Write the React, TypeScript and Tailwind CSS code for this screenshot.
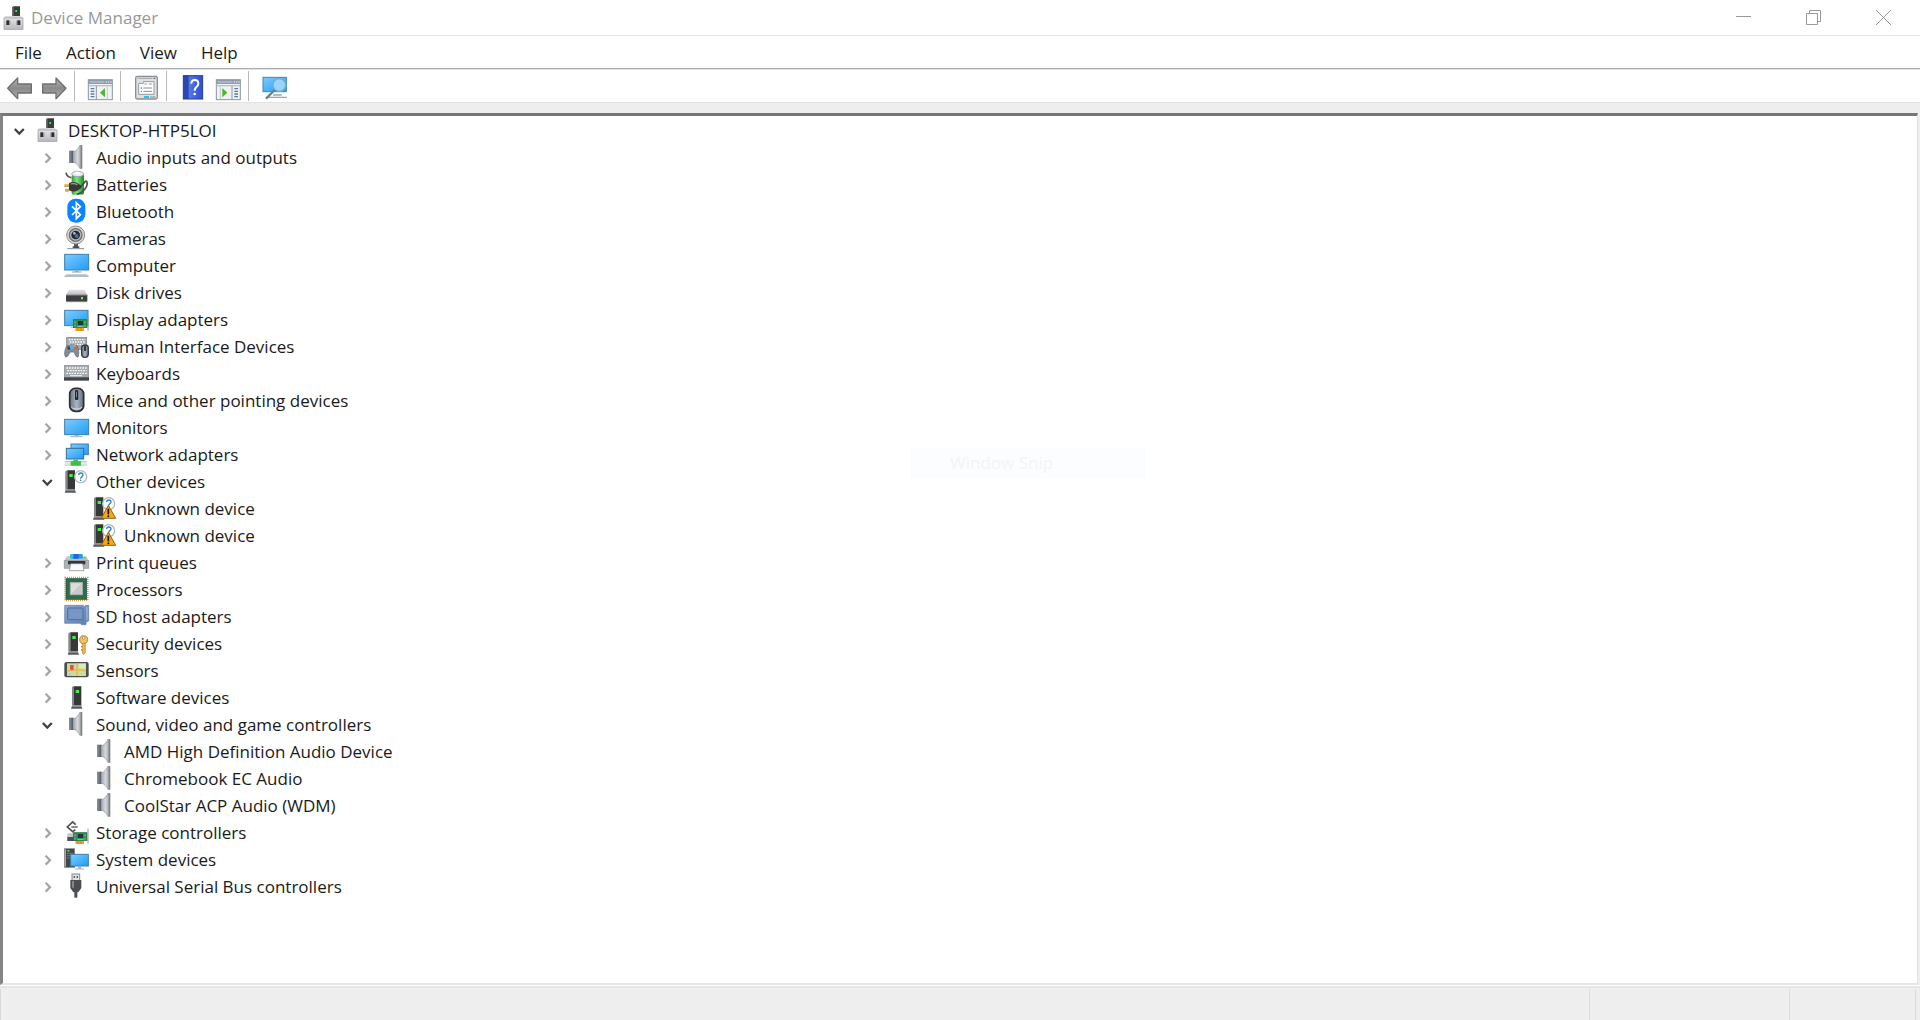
import React, { useState } from 'react';

type IconProps = { children: React.ReactNode };

// Tree icons are drawn on a 72 x 81 grid and fill the height of a row
const TreeIcon: React.FC<IconProps> = ({ children }) => (
  <svg viewBox="0 0 72 81" className="w-6 h-[27px] shrink-0 overflow-visible" aria-hidden="true">
    {children}
  </svg>
);

const ToolIcon: React.FC<IconProps> = ({ children }) => (
  <svg viewBox="0 0 72 96" className="w-6 h-8 shrink-0 overflow-visible" aria-hidden="true">
    {children}
  </svg>
);

const Gradients = () => (
  <svg className="absolute w-0 h-0" aria-hidden="true">
    <defs>
      <linearGradient id="screen" x1="0" y1="0" x2="1" y2="1">
        <stop offset="0" stopColor="#7fcbff" />
        <stop offset="1" stopColor="#1e9df5" />
      </linearGradient>
      <linearGradient id="cone" x1="0" y1="0" x2="1" y2="0">
        <stop offset="0" stopColor="#a4a9ae" />
        <stop offset="0.5" stopColor="#d6d8db" />
        <stop offset="1" stopColor="#9a9ea4" />
      </linearGradient>
      <linearGradient id="magnet" x1="0" y1="0" x2="1" y2="0">
        <stop offset="0" stopColor="#8b96a3" />
        <stop offset="1" stopColor="#4a5460" />
      </linearGradient>
      <linearGradient id="case" x1="0" y1="0" x2="0" y2="1">
        <stop offset="0" stopColor="#e4e4e6" />
        <stop offset="1" stopColor="#b9b9bd" />
      </linearGradient>
      <linearGradient id="arrow" x1="0" y1="0" x2="0" y2="1">
        <stop offset="0" stopColor="#b5b5b5" />
        <stop offset="0.5" stopColor="#8a8a8a" />
        <stop offset="1" stopColor="#b0b0b0" />
      </linearGradient>
      <linearGradient id="help" x1="0" y1="0" x2="1" y2="0">
        <stop offset="0" stopColor="#2c46b4" />
        <stop offset="0.25" stopColor="#2c46b4" />
        <stop offset="0.3" stopColor="#5478e6" />
        <stop offset="1" stopColor="#2f4fc8" />
      </linearGradient>
      <linearGradient id="sd" x1="0" y1="0" x2="1" y2="1">
        <stop offset="0" stopColor="#8fa9d0" />
        <stop offset="1" stopColor="#5b7cae" />
      </linearGradient>
      <linearGradient id="battery" x1="0" y1="0" x2="1" y2="0">
        <stop offset="0" stopColor="#2f9b35" />
        <stop offset="0.4" stopColor="#7be77d" />
        <stop offset="1" stopColor="#1f8a26" />
      </linearGradient>
      <linearGradient id="mouse" x1="0" y1="0" x2="1" y2="0">
        <stop offset="0" stopColor="#66727f" />
        <stop offset="0.5" stopColor="#a9b6c5" />
        <stop offset="1" stopColor="#5f6b78" />
      </linearGradient>
    </defs>
  </svg>
);

const DeviceHubIcon = () => (
  <TreeIcon>
    <path d="M30 7l5-3h19v31H30z" fill="#3b3b3d" />
    <path d="M30 7l5-3v31h-5z" fill="#6d6d70" />
    <rect x="40" y="15" width="5" height="6" fill="#3df04a" />
    <path d="M14 33h42l7 7H5l4-7z" fill="#d9d9dc" />
    <rect x="6" y="39" width="57" height="34" fill="url(#case)" stroke="#98989c" strokeWidth="2" />
    <rect x="13" y="46" width="9" height="14" fill="#2e2e30" />
    <rect x="46" y="46" width="9" height="14" fill="#2e2e30" />
    <path d="M24 47v13M44 47v13" stroke="#8a8a8e" strokeWidth="2" />
  </TreeIcon>
);

const SpeakerIcon = () => (
  <TreeIcon>
    <rect x="15" y="20" width="14" height="37" fill="url(#magnet)" />
    <path d="M28 24C37 21 44 13 48 3h5v71h-5C44 64 37 57 28 54z" fill="url(#cone)" />
    <path d="M28 24C37 21 44 13 48 3M28 54c9 3 16 10 20 20" fill="none" stroke="#8b9097" strokeWidth="2" />
    <rect x="50" y="3" width="5" height="71" rx="2" fill="#7f8389" />
  </TreeIcon>
);

const BatteryIcon = () => (
  <TreeIcon>
    <rect x="23" y="9" width="37" height="62" rx="6" fill="url(#battery)" />
    <ellipse cx="41" cy="9" rx="18" ry="8" fill="#e9e9f2" stroke="#8b8ba0" strokeWidth="2" />
    <ellipse cx="41" cy="6" rx="8" ry="4" fill="#fff" />
    <path d="M6 5c2 10 6 14 16 15" fill="none" stroke="#505050" strokeWidth="5" />
    <path d="M50 45c10-2 11-18 18-14 6 12-8 34-30 39" fill="none" stroke="#4a4d4a" strokeWidth="5" />
    <path d="M15 36c8-5 20-4 28 2l9 6v7l-9 6c-8 6-20 6-28 1z" fill="#3a3836" />
    <path d="M20 39c8-3 14-2 20 3" stroke="#9a9490" strokeWidth="4" fill="none" />
    <path d="M1 42h14M3 56h12" stroke="#e3b01e" strokeWidth="5" />
    <path d="M1 46h14M3 60h12" stroke="#6d5207" strokeWidth="2" />
  </TreeIcon>
);

const BluetoothIcon = () => (
  <TreeIcon>
    <rect x="10" y="2" width="54" height="72" rx="25" fill="#0a84ff" />
    <path d="M24 25l25 25-12 12V14l12 12-25 25" fill="none" stroke="#fff" strokeWidth="5" />
  </TreeIcon>
);

const CameraIcon = () => (
  <TreeIcon>
    <rect x="30" y="54" width="12" height="13" fill="#555" />
    <path d="M10 71h50" stroke="#8d8d8d" strokeWidth="3" />
    <path d="M26 64h20v5H26z" fill="#4b4b4b" />
    <circle cx="35" cy="30" r="27" fill="#d8d8d8" stroke="#8b8b8b" strokeWidth="3" />
    <circle cx="35" cy="30" r="19" fill="#b5b5b5" stroke="#707070" strokeWidth="4" />
    <circle cx="35" cy="30" r="13" fill="#1f2a38" />
    <circle cx="38" cy="33" r="6" fill="#4d7096" />
    <circle cx="31" cy="25" r="4" fill="#a9bccf" />
  </TreeIcon>
);

const ComputerIcon = () => (
  <TreeIcon>
    <rect x="2" y="7" width="72" height="47" fill="url(#screen)" stroke="#3f7fac" strokeWidth="3" />
    <path d="M32 55h12v5H32z" fill="#9fb4c4" />
    <path d="M24 60h29" stroke="#8da2b2" strokeWidth="3" />
    <path d="M8 67h60l6 6H1z" fill="#b5c4d1" />
    <path d="M1 73h73" stroke="#8496a5" strokeWidth="2" />
  </TreeIcon>
);

const DiskIcon = () => (
  <TreeIcon>
    <path d="M15 32h46l9 17H6z" fill="url(#case)" />
    <path d="M6 48h64v18l-3 3H9l-3-3z" fill="#3e3e40" />
    <path d="M6 48h64" stroke="#8b8b8d" strokeWidth="3" />
    <rect x="51" y="54" width="6" height="7" fill="#4dfb54" />
    <path d="M8 68h60" stroke="#8f8f8f" strokeWidth="3" />
  </TreeIcon>
);

const AdapterCard = () => (
  <>
    <rect x="28" y="41" width="41" height="24" fill="#2f8a55" stroke="#256b43" strokeWidth="2" />
    <rect x="42" y="45" width="15" height="12" fill="#1d3b2c" />
    <path d="M33 46v6M33 56v5M63 46v6M63 57v5M40 61h19" stroke="#7fd8a0" strokeWidth="3" />
    <path d="M34 66h26v9H34z" fill="#f3a21a" />
    <path d="M42 66v9M51 66v9" stroke="#c87708" strokeWidth="2" />
    <path d="M72 29v45" stroke="#8c9a96" strokeWidth="3" />
  </>
);

const DisplayAdapterIcon = () => (
  <TreeIcon>
    <rect x="2" y="13" width="70" height="46" fill="url(#screen)" stroke="#3f7fac" strokeWidth="3" />
    <path d="M20 64h12" stroke="#9fb4c4" strokeWidth="3" />
    <AdapterCard />
  </TreeIcon>
);

const HidIcon = () => (
  <TreeIcon>
    <rect x="8" y="13" width="60" height="36" fill="#a2a9b1" stroke="#7c838b" strokeWidth="2" />
    <path d="M14 20h50M17 27h45M14 34h50" stroke="#fff" strokeWidth="4" strokeDasharray="5 3" />
    <path d="M9 38c8-4 24-4 30 0 6 8 7 27 3 34-7 2-9-12-13-15H19c-4 3-6 16-14 15-6-7-2-26 4-34z" fill="#848c96" stroke="#555c65" strokeWidth="2" />
    <circle cx="15" cy="45" r="5" fill="#3a4048" />
    <circle cx="31" cy="38" r="4" fill="#f2a23a" />
    <circle cx="24" cy="42" r="7" fill="#44b4ff" />
    <circle cx="34" cy="46" r="4" fill="#e8574a" />
    <rect x="53" y="36" width="20" height="37" rx="9" fill="url(#mouse)" stroke="#3a4046" strokeWidth="4" />
    <path d="M63 38v16" stroke="#1e2226" strokeWidth="5" />
  </TreeIcon>
);

const KeyboardIcon = () => (
  <TreeIcon>
    <rect x="1" y="16" width="73" height="38" fill="#a5abb1" stroke="#868c92" strokeWidth="2" />
    <path d="M7 24h62M10 32h58M7 40h62" stroke="#fff" strokeWidth="4" strokeDasharray="5 3" />
    <path d="M18 47h36" stroke="#f4f4f4" strokeWidth="3" />
    <path d="M0 52h75v10H0z" fill="#42464a" />
  </TreeIcon>
);

const MouseIcon = () => (
  <TreeIcon>
    <rect x="17" y="4" width="42" height="69" rx="17" fill="url(#mouse)" stroke="#2a2d31" strokeWidth="5" />
    <rect x="33" y="9" width="10" height="30" rx="3" fill="#26292d" />
    <rect x="36" y="14" width="3" height="16" fill="#788492" />
    <path d="M22 60c6 8 26 8 32 0" stroke="#dce3ea" strokeWidth="3" fill="none" />
  </TreeIcon>
);

const MonitorIcon = () => (
  <TreeIcon>
    <rect x="2" y="16" width="72" height="46" fill="url(#screen)" stroke="#3f7fac" strokeWidth="3" />
    <path d="M32 63h12v4H32z" fill="#9fb4c4" />
    <path d="M19 68h37" stroke="#9fb0bd" strokeWidth="3" />
  </TreeIcon>
);

const NetworkIcon = () => (
  <TreeIcon>
    <rect x="21" y="9" width="52" height="32" fill="url(#screen)" stroke="#3f7fac" strokeWidth="3" />
    <rect x="7" y="22" width="52" height="32" fill="url(#screen)" stroke="#2f6f9c" strokeWidth="3" />
    <path d="M2 62h66M2 72h66" stroke="#b5b9b7" strokeWidth="3" />
    <path d="M2 67h66" stroke="#e3e5e4" strokeWidth="6" />
    <path d="M28 56h14v5h9v13H20V61h8z" fill="#3fbf4a" />
  </TreeIcon>
);

const Tower = ({ x }: { x: number }) => (
  <g transform={`translate(${x} 0)`}>
    <path d="M0 10l6-3h22v58H0z" fill="#353739" />
    <path d="M0 10l6-3v58H0z" fill="#85888b" />
    <rect x="11" y="18" width="10" height="9" fill="#3ef448" />
    <path d="M0 66h28l3 8H-3z" fill="#56595c" />
    <path d="M0 66h28" stroke="#b7babd" strokeWidth="3" />
  </g>
);

const Question = () => (
  <>
    <circle cx="50" cy="26" r="18" fill="#fff" stroke="#b4b9bd" strokeWidth="4" />
    <path d="M44 21c0-8 13-8 13 0 0 5-7 5-7 11" fill="none" stroke="#2b84cf" strokeWidth="4" />
    <circle cx="50" cy="37" r="2.5" fill="#2b84cf" />
  </>
);

const OtherIcon = () => (
  <TreeIcon>
    <Tower x={5} />
    <Question />
  </TreeIcon>
);

const UnknownIcon = () => (
  <TreeIcon>
    <Tower x={6} />
    <Question />
    <path d="M49 31L71 70H28z" fill="#f4a81d" stroke="#9b5f06" strokeWidth="3" strokeLinejoin="round" />
    <path d="M49 41v17" stroke="#1c1400" strokeWidth="5" />
    <circle cx="49" cy="64" r="3" fill="#1c1400" />
  </TreeIcon>
);

const PrinterIcon = () => (
  <TreeIcon>
    <path d="M17 29l3-14h35l3 14z" fill="#1b9fe8" />
    <path d="M20 15h10l-3 14H17z" fill="#27c4d8" />
    <path d="M30 15h14v14H27z" fill="#2466d8" />
    <path d="M8 22h10l2 8h36l2-8h9l7 13H1z" fill="#c7c9cb" />
    <path d="M1 34h73v24H1z" fill="#aeb2b6" stroke="#85898d" strokeWidth="2" />
    <path d="M12 36h52v10H12z" fill="#333639" />
    <path d="M20 44h36l4 21H16z" fill="#fafafa" stroke="#7d8185" strokeWidth="2" />
    <rect x="58" y="24" width="7" height="5" fill="#3fdb50" />
  </TreeIcon>
);

const ProcessorIcon = () => (
  <TreeIcon>
    <rect x="3" y="5" width="68" height="68" fill="none" stroke="#c9a353" strokeWidth="5" strokeDasharray="3 3" />
    <rect x="6" y="8" width="62" height="62" fill="#2f6b4c" stroke="#225540" strokeWidth="2" />
    <rect x="19" y="20" width="36" height="36" fill="#dcdddc" stroke="#a9b5ae" strokeWidth="3" />
    <path d="M21 54L53 22v32z" fill="#c8cac9" />
  </TreeIcon>
);

const SdIcon = () => (
  <TreeIcon>
    <path d="M2 7h56v4h6V7h10v47l-8 3v8H52l-3-4H2z" fill="url(#sd)" stroke="#5f7fae" strokeWidth="2" />
    <rect x="11" y="15" width="46" height="35" rx="3" fill="#7896c3" stroke="#4f6f9f" strokeWidth="3" />
    <path d="M69 12v40" stroke="#b4c6df" strokeWidth="3" />
  </TreeIcon>
);

const SecurityIcon = () => (
  <TreeIcon>
    <Tower x={14} />
    <circle cx="59" cy="29" r="12" fill="#efc56c" stroke="#bc8830" strokeWidth="3" />
    <circle cx="59" cy="24" r="4" fill="#fff" stroke="#a97726" strokeWidth="2" />
    <path d="M55 40h9v28l-5 6-4-5z" fill="#e7b451" stroke="#bc8830" strokeWidth="2" />
    <path d="M55 50h-4M55 60h-4" stroke="#bc8830" strokeWidth="4" />
  </TreeIcon>
);

const SensorIcon = () => (
  <TreeIcon>
    <rect x="1" y="15" width="73" height="46" rx="6" fill="#4c4f50" />
    <rect x="9" y="19" width="57" height="38" fill="#cbdc9d" />
    <path d="M9 43c16-8 34-4 57-2M39 19v38" stroke="#e6bd4d" strokeWidth="5" fill="none" />
    <rect x="45" y="20" width="20" height="14" fill="#ddebb8" />
    <path d="M18 24h11v12l-5 5-6-5z" fill="#e54d55" />
    <path d="M10 56l8-8 6 8z" fill="#a2cde0" />
  </TreeIcon>
);

const SoftwareIcon = () => (
  <TreeIcon>
    <Tower x={24} />
  </TreeIcon>
);

const StorageIcon = () => (
  <TreeIcon>
    <path d="M10 43h30v23H10z" fill="#c3c6c9" />
    <path d="M10 54h24v12H10z" fill="#4c5053" />
    <path d="M35 17l-9-8L10 24l16 14 8-6" fill="none" stroke="#4e5255" strokeWidth="5" />
    <path d="M22 24h19" stroke="#4e5255" strokeWidth="4" />
    <AdapterCard />
  </TreeIcon>
);

const SystemIcon = () => (
  <TreeIcon>
    <rect x="1" y="8" width="31" height="56" fill="#434649" stroke="#85898c" strokeWidth="2" />
    <path d="M4 10v52" stroke="#a5a9ac" strokeWidth="4" />
    <rect x="10" y="12" width="6" height="5" fill="#41ef4b" />
    <path d="M8 22h19M8 29h19M8 36h19" stroke="#92969a" strokeWidth="2" />
    <rect x="20" y="25" width="53" height="35" fill="url(#screen)" stroke="#3f7fac" strokeWidth="3" />
    <path d="M42 62h10v6H42z" fill="#9fb4c4" />
    <path d="M33 69h27" stroke="#9fb4c4" strokeWidth="3" />
  </TreeIcon>
);

const UsbIcon = () => (
  <TreeIcon>
    <rect x="24" y="3" width="23" height="20" fill="#dfe0e1" stroke="#85888b" strokeWidth="3" />
    <path d="M29 9h4v6h-4zM38 9h4v6h-4z" fill="#55585b" />
    <path d="M19 21h33v24l-9 13H28l-9-13z" fill="#4b4e50" />
    <path d="M24 24h6v20h-6z" fill="#85888b" />
    <path d="M31 57h9v17h-9z" fill="#4b4e50" />
  </TreeIcon>
);

interface DeviceNode {
  id: string;
  name: string;
  icon: React.FC;
  children?: DeviceNode[];
  leaf?: boolean;
}

const categories: DeviceNode[] = [
  { id: 'audio', name: 'Audio inputs and outputs', icon: SpeakerIcon },
  { id: 'batteries', name: 'Batteries', icon: BatteryIcon },
  { id: 'bluetooth', name: 'Bluetooth', icon: BluetoothIcon },
  { id: 'cameras', name: 'Cameras', icon: CameraIcon },
  { id: 'computer', name: 'Computer', icon: ComputerIcon },
  { id: 'disks', name: 'Disk drives', icon: DiskIcon },
  { id: 'display', name: 'Display adapters', icon: DisplayAdapterIcon },
  { id: 'hid', name: 'Human Interface Devices', icon: HidIcon },
  { id: 'keyboards', name: 'Keyboards', icon: KeyboardIcon },
  { id: 'mice', name: 'Mice and other pointing devices', icon: MouseIcon },
  { id: 'monitors', name: 'Monitors', icon: MonitorIcon },
  { id: 'network', name: 'Network adapters', icon: NetworkIcon },
  {
    id: 'other',
    name: 'Other devices',
    icon: OtherIcon,
    children: [
      { id: 'unknown-1', name: 'Unknown device', icon: UnknownIcon, leaf: true },
      { id: 'unknown-2', name: 'Unknown device', icon: UnknownIcon, leaf: true },
    ],
  },
  { id: 'print', name: 'Print queues', icon: PrinterIcon },
  { id: 'processors', name: 'Processors', icon: ProcessorIcon },
  { id: 'sd', name: 'SD host adapters', icon: SdIcon },
  { id: 'security', name: 'Security devices', icon: SecurityIcon },
  { id: 'sensors', name: 'Sensors', icon: SensorIcon },
  { id: 'software', name: 'Software devices', icon: SoftwareIcon },
  {
    id: 'sound',
    name: 'Sound, video and game controllers',
    icon: SpeakerIcon,
    children: [
      { id: 'amd', name: 'AMD High Definition Audio Device', icon: SpeakerIcon, leaf: true },
      { id: 'chromebook', name: 'Chromebook EC Audio', icon: SpeakerIcon, leaf: true },
      { id: 'coolstar', name: 'CoolStar ACP Audio (WDM)', icon: SpeakerIcon, leaf: true },
    ],
  },
  { id: 'storage', name: 'Storage controllers', icon: StorageIcon },
  { id: 'system', name: 'System devices', icon: SystemIcon },
  { id: 'usb', name: 'Universal Serial Bus controllers', icon: UsbIcon },
];

const root: DeviceNode = { id: 'root', name: 'DESKTOP-HTP5LOI', icon: DeviceHubIcon, children: categories };

interface TreeItemProps {
  node: DeviceNode;
  open: string[];
  onToggle: (id: string) => void;
}

const TreeItem: React.FC<TreeItemProps> = ({ node, open, onToggle }) => {
  const isOpen = open.includes(node.id);
  const Icon = node.icon;

  return (
    <li>
      <div className="flex items-center h-[27px]">
        {node.leaf ? (
          <span className="w-6 shrink-0" />
        ) : (
          <button
            onClick={() => onToggle(node.id)}
            aria-label={node.name}
            aria-expanded={isOpen}
            className="flex items-center justify-center w-6 h-6 shrink-0"
          >
            <svg viewBox="0 0 12 12" className="w-3 h-3" fill="none" aria-hidden="true">
              {isOpen ? (
                <path d="M1.8 4L6.3 8.5 10.8 4" stroke="#404040" strokeWidth="2.3" />
              ) : (
                <path d="M4.6 1.8L9 6.2 4.6 10.6" stroke="#a6a6a6" strokeWidth="2.3" />
              )}
            </svg>
          </button>
        )}
        <div className="flex items-center gap-2 ml-[5px]">
          <Icon />
          <span className="whitespace-nowrap">{node.name}</span>
        </div>
      </div>
      {isOpen && node.children && (
        <ul className="pl-7">
          {node.children.map((child) => (
            <TreeItem key={child.id} node={child} open={open} onToggle={onToggle} />
          ))}
        </ul>
      )}
    </li>
  );
};

const Separator = () => <div className="w-px h-[30px] bg-[#b8b8b8] ml-[7px] mr-[14px]" />;

const PaneFrame = () => (
  <>
    <rect x="-2" y="29" width="72" height="60" fill="#f1f2f4" stroke="#8e959d" strokeWidth="3" />
    <path d="M-2 30h72v12H-2z" fill="#8f9bab" />
    <path d="M2 36h44" stroke="#c8d0da" strokeWidth="3" />
    <path d="M50 36h4M57 36h4M64 36h4" stroke="#fff" strokeWidth="3" />
    <path d="M-1 47h70" stroke="#b9c0c8" strokeWidth="4" />
  </>
);

const App = () => {
  const [open, setOpen] = useState<string[]>(['root', 'other', 'sound']);

  const handleToggle = (id: string) => {
    setOpen((prev) => (prev.includes(id) ? prev.filter((item) => item !== id) : [...prev, id]));
  };

  return (
    <div className="flex flex-col min-h-screen bg-[#eeeeee] font-['Open_Sans','Noto_Sans',sans-serif] text-[17px] leading-6 text-[#1a1a1a]">
      <Gradients />

      {/* Title bar */}
      <header className="flex items-center justify-between h-9 bg-white border-b border-[#e6e6e6]">
        <div className="flex items-center gap-[5px] pl-[2px] pt-px text-[#999999]">
          <DeviceHubIcon />
          <h1>Device Manager</h1>
        </div>
        <div className="flex h-full pr-[2px] text-[#999999]">
          <button aria-label="Minimize" className="flex items-center justify-center w-[70px]">
            <svg viewBox="0 0 15 15" className="w-[15px] h-[15px]" fill="none" stroke="currentColor">
              <path d="M0 6.5h15" />
            </svg>
          </button>
          <button aria-label="Restore" className="flex items-center justify-center w-[70px]">
            <svg viewBox="0 0 15 15" className="w-[15px] h-[15px]" fill="none" stroke="currentColor">
              <path d="M.5 3.5h11v11H.5zM3.5 3.5v-3h11v11h-3" />
            </svg>
          </button>
          <button aria-label="Close" className="flex items-center justify-center w-[70px]">
            <svg viewBox="0 0 15 15" className="w-[15px] h-[15px]" fill="none" stroke="currentColor">
              <path d="M0 0l15 15M15 0L0 15" />
            </svg>
          </button>
        </div>
      </header>

      {/* Menu bar */}
      <nav className="flex items-center h-[33px] pl-[3px] pt-[2px] bg-white border-b border-[#a9adb0]">
        <button className="px-3">File</button>
        <button className="px-3">Action</button>
        <button className="px-3">View</button>
        <button className="px-3">Help</button>
      </nav>

      {/* Toolbar */}
      <div className="flex items-center h-[34px] pl-[7px] bg-white border-t border-b border-t-[#dfe5e9] border-b-[#e2e2e2]">
        <div className="flex items-center gap-3">
          <button aria-label="Back">
            <ToolIcon>
              <path d="M2 55L32 24v18h41v27H32v17z" fill="url(#arrow)" stroke="#6f6f6f" strokeWidth="4" strokeLinejoin="round" />
            </ToolIcon>
          </button>
          <button aria-label="Forward">
            <ToolIcon>
              <path d="M69 55L39 24v18H-1v27h40v17z" fill="url(#arrow)" stroke="#6f6f6f" strokeWidth="4" strokeLinejoin="round" />
            </ToolIcon>
          </button>
        </div>
        <Separator />
        <button aria-label="Show/Hide Console Tree">
          <ToolIcon>
            <PaneFrame />
            <path d="M22 48v40" stroke="#8e959d" strokeWidth="3" />
            <path d="M5 56h11M5 64h11M5 72h11M5 80h11" stroke="#4a7fb5" strokeWidth="4" />
            <path d="M48 54v28L33 68z" fill="#4fb62b" />
            <path d="M55 49v39" stroke="#c5cbd2" strokeWidth="3" />
          </ToolIcon>
        </button>
        <Separator />
        <button aria-label="Properties">
          <ToolIcon>
            <rect x="2" y="19" width="65" height="68" rx="5" fill="#dfe0e2" stroke="#8b8f93" strokeWidth="4" />
            <path d="M8 25h44" stroke="#aab0b5" strokeWidth="4" />
            <path d="M56 25h5" stroke="#60656a" strokeWidth="4" />
            <path d="M11 40h14v-5h32v38H11z" fill="#fff" stroke="#969ba0" strokeWidth="3" />
            <path d="M28 42h8M41 42h10" stroke="#969ba0" strokeWidth="3" />
            <path d="M17 54h4M17 64h4" stroke="#2ba6de" strokeWidth="4" />
            <path d="M25 54h26M25 64h26" stroke="#8b9095" strokeWidth="3" />
            <path d="M27 81h15" stroke="#27c3ef" strokeWidth="6" />
            <path d="M46 81h15" stroke="#b0b4b8" strokeWidth="6" />
          </ToolIcon>
        </button>
        <Separator />
        <div className="flex items-center gap-3">
          <button aria-label="Help topics">
            <ToolIcon>
              <rect x="7" y="17" width="58" height="70" fill="url(#help)" stroke="#243a99" strokeWidth="3" />
              <path d="M31 41c0-15 21-15 21 0 0 10-11 9-11 21" fill="none" stroke="#fff" strokeWidth="6" />
              <circle cx="41" cy="72" r="4" fill="#fff" />
            </ToolIcon>
          </button>
          <button aria-label="Show/Hide Action Pane">
            <ToolIcon>
              <PaneFrame />
              <path d="M45 48v40" stroke="#8e959d" strokeWidth="3" />
              <path d="M52 56h11M52 64h11M52 72h11M52 80h11" stroke="#4a7fb5" strokeWidth="4" />
              <path d="M16 54v28l15-14z" fill="#4fb62b" />
              <path d="M10 49v39" stroke="#c5cbd2" strokeWidth="3" />
            </ToolIcon>
          </button>
        </div>
        <Separator />
        <button aria-label="Scan for hardware changes">
          <ToolIcon>
            <rect x="0" y="22" width="70" height="43" fill="url(#screen)" stroke="#3f86b8" strokeWidth="3" />
            <path d="M14 82h58M30 75h26" stroke="#8fa6b6" strokeWidth="4" />
            <circle cx="49" cy="45" r="19" fill="#a9dcf6" fillOpacity="0.85" stroke="#78aeca" strokeWidth="4" />
            <path d="M35 60L9 86" stroke="#6d7f8c" strokeWidth="7" />
          </ToolIcon>
        </button>
      </div>

      {/* Device tree */}
      <main className="relative flex-1 mt-[10px] mr-[2px] bg-white border-t-[3px] border-l-[3px] border-b-2 border-r border-t-[#777777] border-l-[#858585] border-b-[#e6e6e6] border-r-[#e3e3e3]">
        <ul className="pl-1 pt-px">
          <TreeItem node={root} open={open} onToggle={handleToggle} />
        </ul>
        <div className="absolute left-[907px] top-[331px] w-[236px] h-[31px] flex items-center pl-10 bg-[#fbfdff] text-[#f3f4f6] pointer-events-none">
          Window Snip
        </div>
      </main>

      {/* Status bar */}
      <footer className="flex h-[35px] border-t border-white">
        <div className="flex w-full border-t-2 border-[#e6e6e6] pt-px">
          <div className="flex-1 border-l border-[#d9d9d9]" />
          <div className="w-[200px] border-l border-[#dcdcdc]" />
          <div className="w-[127px] border-l border-r border-[#dcdcdc]" />
          <div className="w-1" />
        </div>
      </footer>
    </div>
  );
};

export default App;
